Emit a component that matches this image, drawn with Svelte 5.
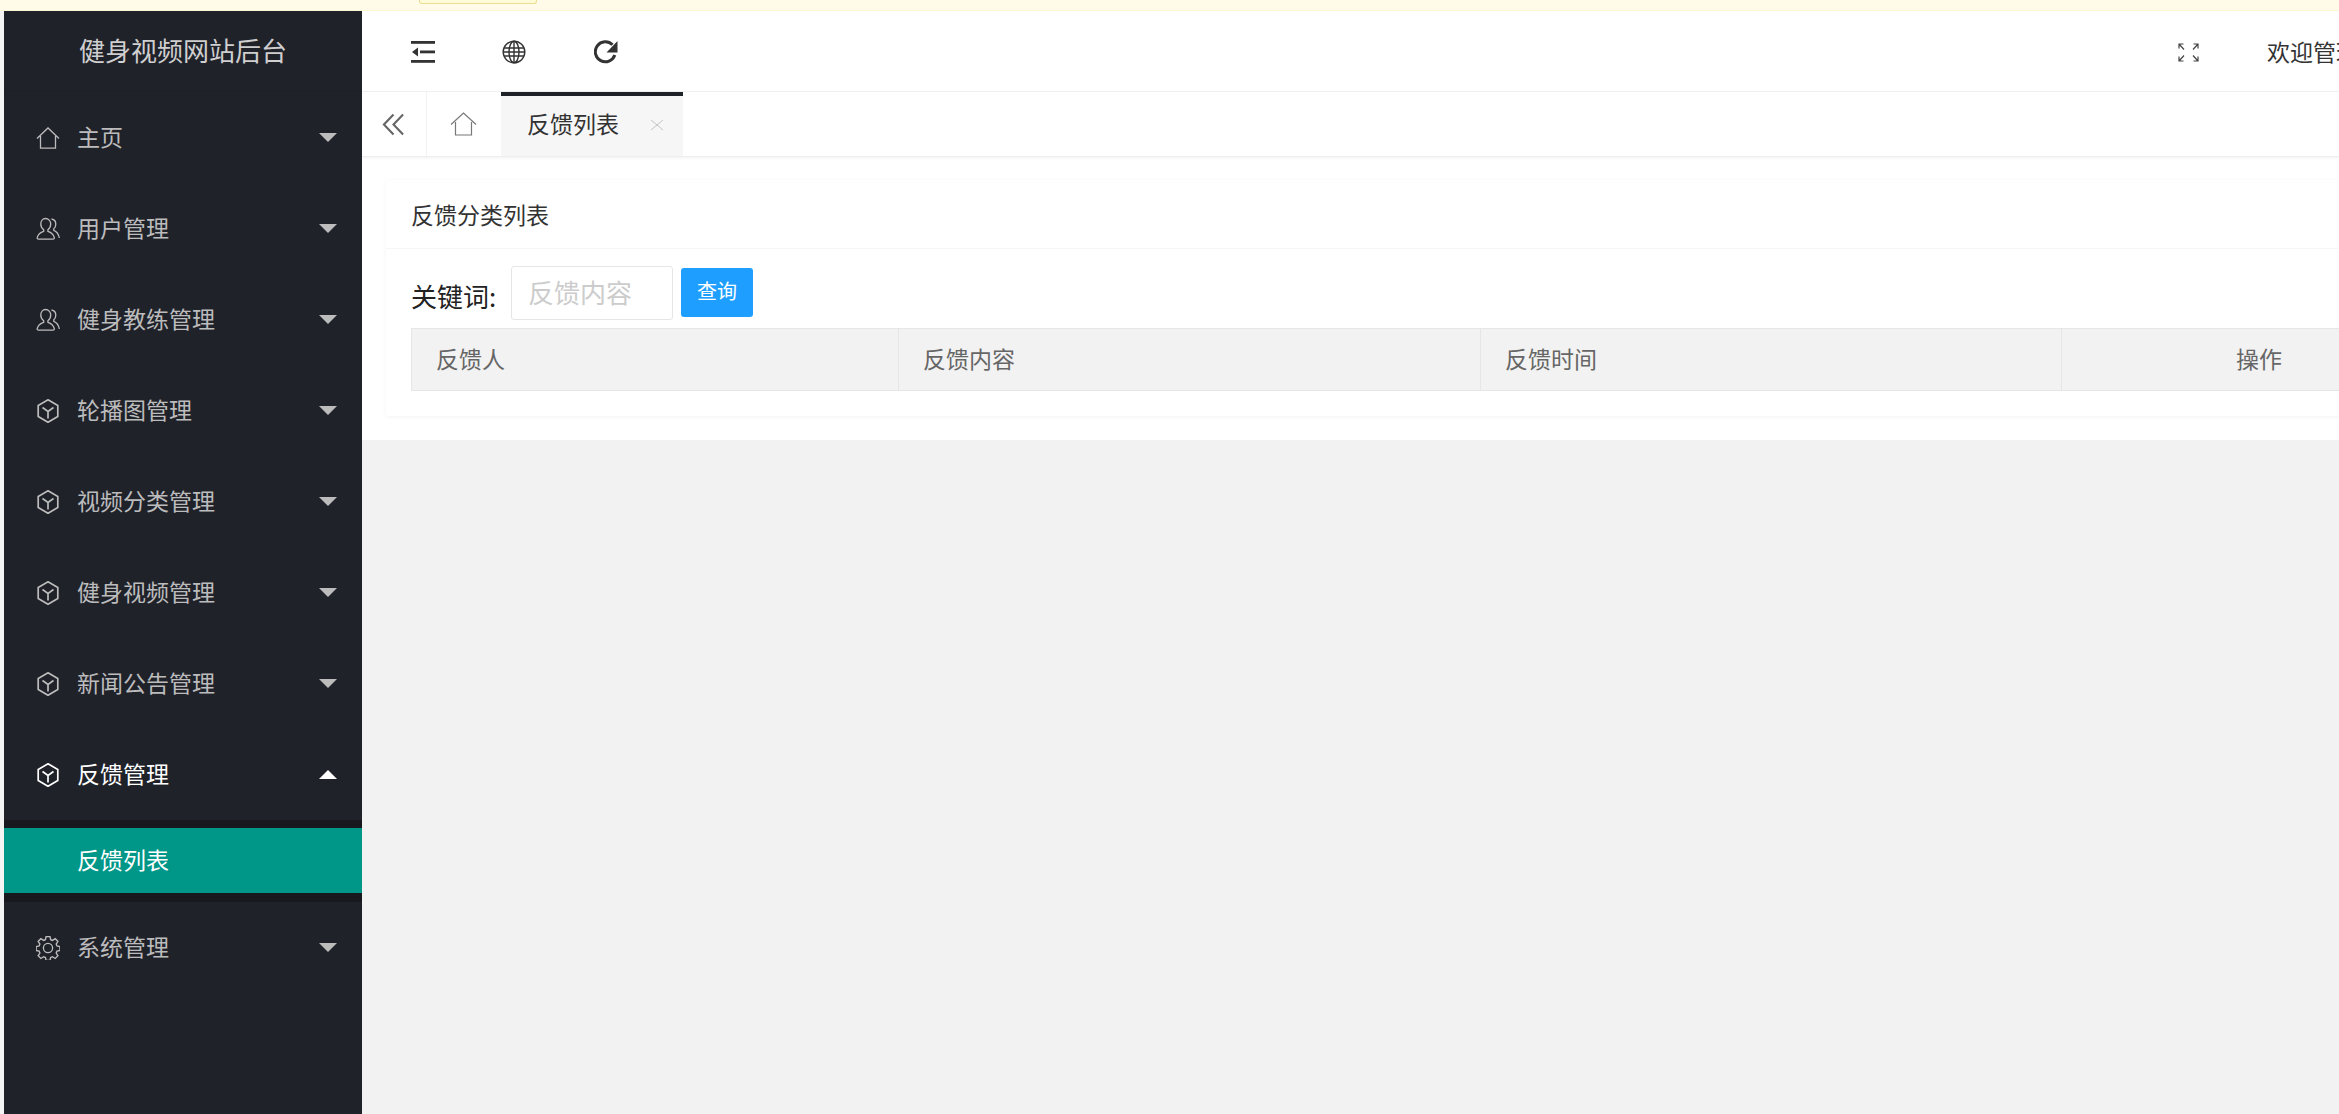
<script>
  const menu = [
    { label: '主页', icon: 'home' },
    { label: '用户管理', icon: 'user' },
    { label: '健身教练管理', icon: 'user' },
    { label: '轮播图管理', icon: 'cube' },
    { label: '视频分类管理', icon: 'cube' },
    { label: '健身视频管理', icon: 'cube' },
    { label: '新闻公告管理', icon: 'cube' },
    { label: '反馈管理', icon: 'cube', open: true, children: ['反馈列表'] },
    { label: '系统管理', icon: 'gear' }
  ];
  const columns = ['反馈人', '反馈内容', '反馈时间', '操作'];
</script>

{#snippet icon(name)}
  <svg class="menu-icon" viewBox="0 0 24 24" fill="none" stroke="currentColor" stroke-width="1.3">
    {#if name === 'home'}
      <path d="M1 12.5 12 2l11 10.5M4.5 10v12.2h15V10" />
    {:else if name === 'user'}
      <path d="M9.500 1.500c3 0 5.200 2.500 5.200 5.600 0 2.500-1 4.400-2.800 5.700v1.500c3.200.9 5.600 3 6.400 6.300.2.900-.3 1.500-1.200 1.500H2.400c-.9 0-1.400-.6-1.200-1.500.8-3.300 3.300-5.400 6.500-6.300v-1.500C5.800 11.500 4.800 9.600 4.800 7.100c0-3.100 1.900-5.600 4.700-5.600Z" />
      <path d="M15.500 2c2.700.4 4.300 2.500 4.300 5.200 0 1.800-.7 3.400-2 4.500v1.700c2.800 1 4.700 3.500 5.500 7.600" />
    {:else if name === 'cube'}
      <path d="M12 .8 21.800 6.500v11L12 23.300 2.200 17.500v-11Z" stroke-width="1.700" />
      <path d="m6.500 8.500 5.500 4 5.500-4M12 12.500V19.500" stroke-width="1.700" />
    {:else}
      <circle cx="12" cy="12" r="4.600" />
      <path d="M10 1.500h4l.7 3.200 1.900.8 2.800-1.800 2.800 2.800-1.800 2.800.8 1.900 3 .7v4l-3 .7-.8 1.900 1.800 2.800-2.800 2.800-2.800-1.800-1.900.8-.7 3h-4l-.7-3-1.900-.8-2.800 1.800-2.800-2.800 1.800-2.800-.8-1.900-3-.7v-4l3-.7.8-1.900-1.800-2.800 2.800-2.800 2.800 1.800 1.900-.8Z" transform="translate(.4 -.9) scale(.97)" stroke-width="1.400" />
    {/if}
  </svg>
{/snippet}

<div class="page">
  <div class="notice"><span class="notice-box"></span></div>
  <div class="body">
    <aside class="sidebar">
      <div class="logo">健身视频网站后台</div>
      <nav>
        {#each menu as item}
          <div class="menu-item" class:open={item.open}>
            {@render icon(item.icon)}
            <span>{item.label}</span>
            <i class="caret"></i>
          </div>
          {#if item.children}
            <div class="submenu">
              {#each item.children as child}
                <div class="sub-item">{child}</div>
              {/each}
            </div>
          {/if}
        {/each}
      </nav>
    </aside>

    <main class="main">
      <header class="topbar">
        <svg class="tool indent" viewBox="0 0 24 22" fill="#333">
          <rect y="0" width="24" height="2.800" />
          <rect y="19" width="24" height="2.800" />
          <rect x="9" y="9.500" width="15" height="2.800" />
          <path d="M7 6.500v9L1 11Z" />
        </svg>
        <svg class="tool globe" viewBox="0 0 24 24" fill="none" stroke="#333" stroke-width="1.400">
          <circle cx="12" cy="12" r="10.800" />
          <ellipse cx="12" cy="12" rx="5" ry="10.800" />
          <path d="M12 1v22M2 8h20M2 16h20M1 12h22" />
        </svg>
        <svg class="tool refresh" viewBox="0 0 24 24" fill="none" stroke="#333" stroke-width="3">
          <path d="M20.800 15A10 10 0 1 1 18.500 4.800" />
          <path d="M23.500 1v11.500H12.500Z" fill="#333" stroke="none" />
        </svg>
        <svg class="fullscreen" viewBox="0 0 21 19" fill="none" stroke="#444" stroke-width="1.200">
          <path d="M1 5.500V1h4.500M1 1l5 5.500M20 5.500V1h-4.500M20 1l-5 5.500M1 13.500V18h4.500M1 18l5-5.500M20 13.500V18h-4.500M20 18l-5-5.500" />
        </svg>
        <span class="welcome">欢迎管理员</span>
      </header>

      <div class="tabs">
        <div class="tab-back">
          <svg viewBox="0 0 24 24" fill="none" stroke="#666" stroke-width="2.200">
            <path d="M12 1.500 2 12l10 10.500M22 1.500 12 12l10 10.500" />
          </svg>
        </div>
        <div class="tab-home">
          <svg viewBox="0 0 27 24" fill="none" stroke="#777" stroke-width="1.200">
            <path d="M1 12.500 13.500 1 26 12.500M5.500 10v13h16V10" />
          </svg>
        </div>
        <div class="tab-active">
          <span>反馈列表</span>
          <svg viewBox="0 0 14 12" preserveAspectRatio="none" fill="none" stroke="#c4c4c4" stroke-width="1">
            <path d="m1 1 12 10M13 1 1 11" />
          </svg>
        </div>
      </div>

      <div class="content">
        <section class="card">
          <div class="card-head">反馈分类列表</div>
          <div class="card-body">
            <div class="search">
              <span class="search-label">关键词:</span>
              <input class="search-input" placeholder="反馈内容" />
              <button class="search-btn">查询</button>
            </div>
            <div class="table-head">
              {#each columns as col}
                <div class="th">{col}</div>
              {/each}
            </div>
          </div>
        </section>
      </div>
    </main>
  </div>
</div>

<style>
  :global(body) {
    margin: 0;
    background: #f2f2f2;
    overflow: hidden;
    font-family: "Noto Sans CJK SC", "Liberation Sans", sans-serif;
  }
  .page {
    width: 2339px;
    height: 1114px;
    display: flex;
    flex-direction: column;
    overflow: hidden;
  }
  .notice {
    height: 10px;
    flex: none;
    background: #fffbe8;
    border-bottom: 1px solid #fdf6d4;
    padding-left: 419px;
  }
  .notice-box {
    display: block;
    width: 116px;
    height: 3px;
    background: #fffbd8;
    border: 1px solid #ecdf90;
    border-top: 0;
    border-radius: 0 0 3px 3px;
  }
  .body {
    flex: 1;
    display: flex;
    min-height: 0;
    padding-left: 4px;
    background: #f4f4f4;
  }
  .sidebar {
    width: 358px;
    flex: none;
    background: #20222a;
    color: #bcbcbd;
  }
  .logo {
    height: 80px;
    line-height: 78px;
    text-align: center;
    font-size: 26px;
    box-sizing: border-box;
    border-bottom: 1px solid #1e2027;
    color: #cfcfcf;
  }
  nav {
    padding-top: 1px;
  }
  .menu-item {
    height: 91px;
    display: flex;
    align-items: center;
    padding: 0 25px 0 32px;
    font-size: 23px;
  }
  .menu-item span {
    flex: 1;
    margin-left: 17px;
    padding-bottom: 4px;
  }
  .menu-item.open {
    color: #fff;
  }
  .menu-icon {
    width: 24px;
    height: 24px;
    flex: none;
  }
  .caret {
    width: 0;
    height: 0;
    border-left: 9px solid transparent;
    border-right: 9px solid transparent;
    border-top: 9px solid #bcbcbd;
  }
  .open .caret {
    border-top: 0;
    border-bottom: 9px solid #fff;
  }
  .submenu {
    background: #18191f;
    padding: 8px 0 9px;
    border-radius: 2px;
  }
  .sub-item {
    height: 65px;
    line-height: 62px;
    background: #009688;
    color: #fff;
    padding-left: 73px;
    font-size: 23px;
  }
  .main {
    flex: 1;
    min-width: 0;
    display: flex;
    flex-direction: column;
    overflow: hidden;
    background: #f2f2f2;
  }
  .topbar {
    height: 81px;
    flex: none;
    box-sizing: border-box;
    width: 2120px;
    background: #fff;
    border-bottom: 1px solid #f2f2f2;
    display: flex;
    align-items: center;
    padding-left: 49px;
    padding-top: 2px;
    color: #333;
  }
  .tool {
    width: 24px;
    height: 24px;
    flex: none;
  }
  .indent {
    height: 22px;
  }
  .globe {
    margin-left: 67px;
  }
  .refresh {
    margin-left: 68px;
  }
  .fullscreen {
    width: 21px;
    height: 19px;
    margin-left: auto;
  }
  .welcome {
    margin-left: 68px;
    margin-right: 100px;
    font-size: 23px;
    white-space: nowrap;
    padding-bottom: 2px;
  }
  .tabs {
    height: 65px;
    flex: none;
    box-sizing: border-box;
    background: #fff;
    display: flex;
    border-bottom: 1px solid #eee;
    box-shadow: 0 1px 3px rgba(0, 0, 0, 0.06);
    position: relative;
  }
  .tab-back {
    width: 65px;
    box-sizing: border-box;
    border-right: 1px solid #f2f2f2;
    display: flex;
    align-items: center;
    padding-left: 20px;
  }
  .tab-back svg {
    width: 23px;
    height: 23px;
  }
  .tab-home {
    width: 74px;
    box-sizing: border-box;
    display: flex;
    align-items: center;
    padding-left: 23px;
  }
  .tab-home svg {
    width: 27px;
    height: 24px;
  }
  .tab-active {
    width: 182px;
    box-sizing: border-box;
    background: #f6f6f6;
    border-top: 4px solid #20222a;
    display: flex;
    align-items: center;
    padding-left: 26px;
    padding-bottom: 7px;
    font-size: 23px;
    color: #333;
  }
  .tab-active svg {
    width: 14px;
    height: 12px;
    margin-left: 31px;
    margin-top: 5px;
  }
  .content {
    background: #fff;
    height: 283px;
    flex: none;
    box-sizing: border-box;
    padding: 23px 0 0 24px;
    overflow: hidden;
  }
  .card {
    width: 2095px;
    height: 236px;
    background: #fff;
    border-radius: 3px;
    box-shadow: 0 1px 4px rgba(0, 0, 0, 0.05);
  }
  .card-head {
    height: 69px;
    box-sizing: border-box;
    line-height: 68px;
    padding-left: 25px;
    border-bottom: 1px solid #f6f6f6;
    font-size: 23px;
    color: #333;
  }
  .card-body {
    padding: 17px 25px 0;
  }
  .search {
    height: 62px;
    display: flex;
    align-items: flex-start;
  }
  .search-label {
    width: 100px;
    flex: none;
    font-size: 26px;
    line-height: 59px;
    color: #222;
  }
  .search-input {
    width: 162px;
    height: 54px;
    flex: none;
    box-sizing: border-box;
    border: 1px solid #e6e6e6;
    border-radius: 3px;
    padding: 0 0 3px 16px;
    font: inherit;
    font-size: 26px;
    outline: none;
  }
  .search-input::placeholder {
    color: #ccc;
  }
  .search-btn {
    width: 72px;
    height: 49px;
    margin: 2px 0 0 8px;
    flex: none;
    border: 0;
    border-radius: 3px;
    padding: 0 0 4px;
    background: #1e9fff;
    color: #fff;
    font: inherit;
    font-size: 20px;
  }
  .table-head {
    display: grid;
    grid-template-columns: 487px 582px 581px 394px;
    width: 2044px;
    height: 63px;
    box-sizing: border-box;
    background: #f2f2f2;
    border: 1px solid #e6e6e6;
    border-right: 0;
    color: #666;
    font-size: 23px;
  }
  .th {
    line-height: 58px;
    padding-left: 24px;
    border-right: 1px solid #e6e6e6;
  }
  .th:last-child {
    padding-left: 0;
    text-align: center;
    border-right: 0;
  }
</style>
